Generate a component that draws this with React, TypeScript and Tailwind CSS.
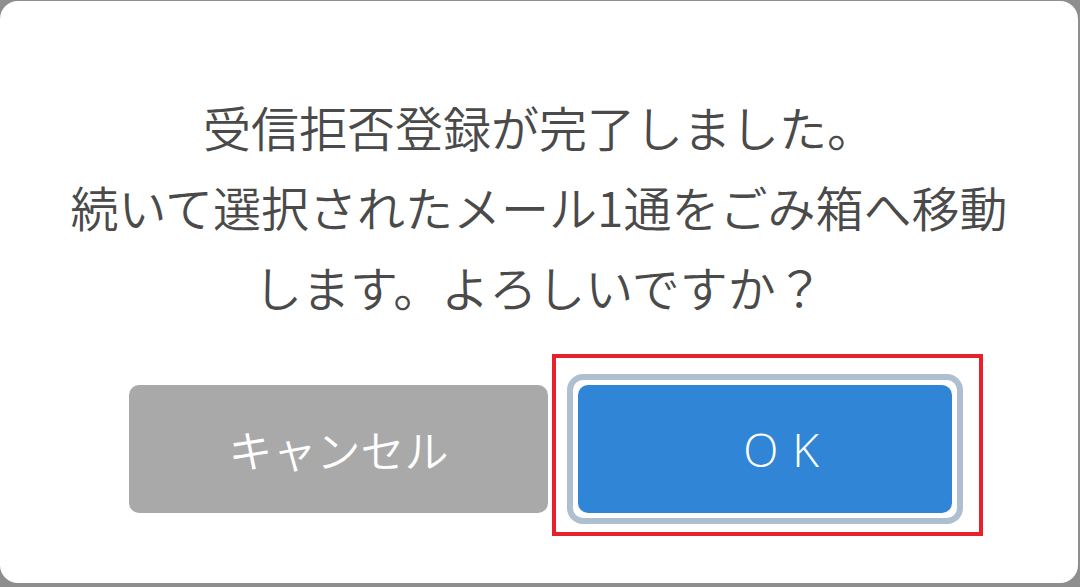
import React from 'react';

const App: React.FC = () => {
  return (
    <div
      className="w-[1080px] h-[587px] bg-[#8e8e8e] pt-[1px] pr-[2px] overflow-hidden"
      style={{ fontFamily: '"Noto Sans CJK JP", "Noto Sans", sans-serif' }}
    >
      <div className="relative w-[1078px] h-[582px] bg-white rounded-[18px] flex flex-col items-center">
        {/* Message */}
        <div className="mt-[85px] text-center text-[48px] leading-[80px] font-[350] text-[#4a4a4a]">
          <p>受信拒否登録が完了しました。</p>
          <p>続いて選択されたメール1通をごみ箱へ移動</p>
          <p>します。よろしいですか？</p>
        </div>

        {/* Buttons */}
        <div className="mt-[48px] flex items-center w-full pl-[129px]">
          <button className="w-[419px] h-[128px] rounded-[10px] bg-[#a9a9a9] text-white text-[44px] font-[350]">
            キャンセル
          </button>
          <div className="ml-[19px] p-[5px] rounded-[16px] border-[6px] border-[#aebfd0]">
            <button
              className="w-[374px] h-[128px] rounded-[10px] bg-[#3085d6] text-white text-[46px] font-[350] tracking-[0.3em] pl-[46px]"
              style={{ fontFamily: '"Open Sans", "Noto Sans CJK JP", sans-serif' }}
            >
              OK
            </button>
          </div>
        </div>

        {/* Highlight annotation */}
        <div className="absolute left-[552px] top-[353px] w-[431px] h-[182px] border-[4px] border-[#e8202a]" />
      </div>
    </div>
  );
};

export default App;
